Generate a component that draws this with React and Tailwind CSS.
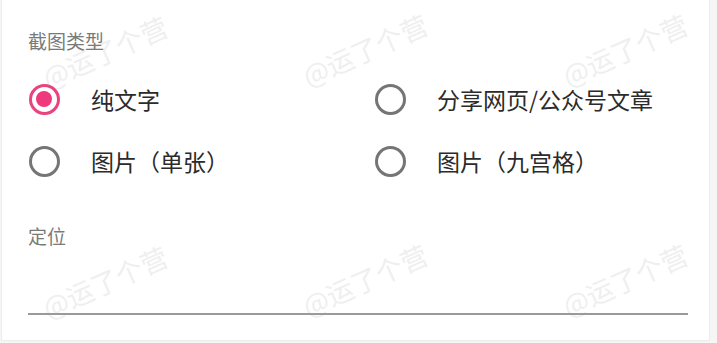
import React from "react";

const font = { fontFamily: '"Noto Sans CJK SC", "Noto Sans", sans-serif' };

function Radio({ checked, label }) {
  return (
    <div className="flex items-center h-[62px]">
      <div className="w-[32px] flex justify-center">
        {checked ? (
          <div className="w-[31px] h-[31px] rounded-full border-[3px] border-[#e94380] flex items-center justify-center">
            <div className="w-[16px] h-[16px] rounded-full bg-[#f0397c]" />
          </div>
        ) : (
          <div className="w-[31px] h-[31px] rounded-full border-[3px] border-[#757575]" />
        )}
      </div>
      <span className="ml-[31px] text-[23px] text-[#2b2b2b] leading-none">{label}</span>
    </div>
  );
}

function Watermark({ className }) {
  return (
    <div className={"absolute text-[27px] leading-none text-[#efefef] -rotate-[24deg] pointer-events-none select-none " + className}>
      @运了个营
    </div>
  );
}

export default function App() {
  return (
    <div className="w-[717px] h-[343px] bg-[#f6f6f6] overflow-hidden" style={font}>
      <div className="relative w-[709px] h-[341px] ml-[1px] bg-white border border-[#ececec] border-t-0">
        <Watermark className="left-[36px] top-[38px]" />
        <Watermark className="left-[296px] top-[36px]" />
        <Watermark className="left-[556px] top-[36px]" />
        <Watermark className="left-[36px] top-[268px]" />
        <Watermark className="left-[296px] top-[266px]" />
        <Watermark className="left-[556px] top-[266px]" />
        <div className="relative pl-[26px] pr-[21px] pt-[31px]">
          <div className="text-[19px] leading-none text-[#7a7a7a]">截图类型</div>
          <div className="grid grid-cols-[346px_1fr] mt-[18px]">
            <Radio checked label="纯文字" />
            <Radio label="分享网页/公众号文章" />
            <Radio label="图片（单张）" />
            <Radio label="图片（九宫格）" />
          </div>
          <div className="mt-[34px] text-[19px] leading-none text-[#7a7a7a]">定位</div>
          <div className="mt-[68px] h-[2px] bg-[#9a9a9a]" />
        </div>
      </div>
    </div>
  );
}
